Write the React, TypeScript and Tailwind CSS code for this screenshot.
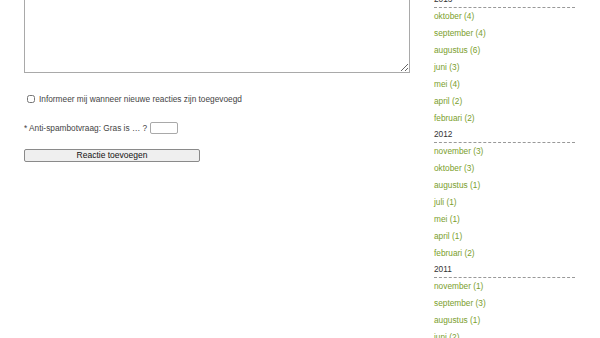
const archive = [
  {
    year: "2013",
    months: [
      ["oktober", 4],
      ["september", 4],
      ["augustus", 6],
      ["juni", 3],
      ["mei", 4],
      ["april", 2],
      ["februari", 2],
    ],
  },
  {
    year: "2012",
    months: [
      ["november", 3],
      ["oktober", 3],
      ["augustus", 1],
      ["juli", 1],
      ["mei", 1],
      ["april", 1],
      ["februari", 2],
    ],
  },
  {
    year: "2011",
    months: [
      ["november", 1],
      ["september", 3],
      ["augustus", 1],
      ["juni", 2],
    ],
  },
] as const;

export default function App() {
  return (
    <div className="w-[600px] h-[338px] overflow-hidden bg-white flex font-['Liberation_Sans',Arial,sans-serif] text-[#444]">
      {/* comment form */}
      <div className="w-[410px] pl-6 flex flex-col shrink-0">
        <textarea className="block w-[386px] h-[120px] -mt-[47px] border border-[#a9a9a9] bg-white resize" />
        <label className="flex items-center mt-[20px] ml-[3px] text-[8.3px] leading-[12px]">
          <input type="checkbox" className="w-[8px] h-[8px] m-0 mr-[4px]" />
          Informeer mij wanneer nieuwe reacties zijn toegevoegd
        </label>
        <div className="flex items-center mt-[17px] text-[8.3px] leading-[12px]">
          <span>* Anti-spambotvraag: Gras is … ?</span>
          <input type="text" className="ml-[3px] w-[28px] h-[12px] border border-[#a9a9a9] rounded-[2px]" />
        </div>
        <button className="mt-[15px] w-[176px] h-[13px] border border-[#8a8a8a] rounded-[2px] bg-[#efefef] text-[8.5px] leading-[11px] text-[#111]">
          Reactie toevoegen
        </button>
      </div>

      {/* archive */}
      <div className="ml-6 w-[141px] -mt-[8px] flex flex-col text-[8.3px]">
        {archive.map((y) => (
          <div key={y.year} className="flex flex-col">
            <div className="h-[16px] leading-[14px] border-b border-dashed border-[#999] text-[#333]">
              {y.year}
            </div>
            {y.months.map(([m, n]) => (
              <a key={m} href="#" className="h-[17px] leading-[16px] text-[#7a9e2c]">
                {m} ({n})
              </a>
            ))}
          </div>
        ))}
      </div>
    </div>
  );
}
